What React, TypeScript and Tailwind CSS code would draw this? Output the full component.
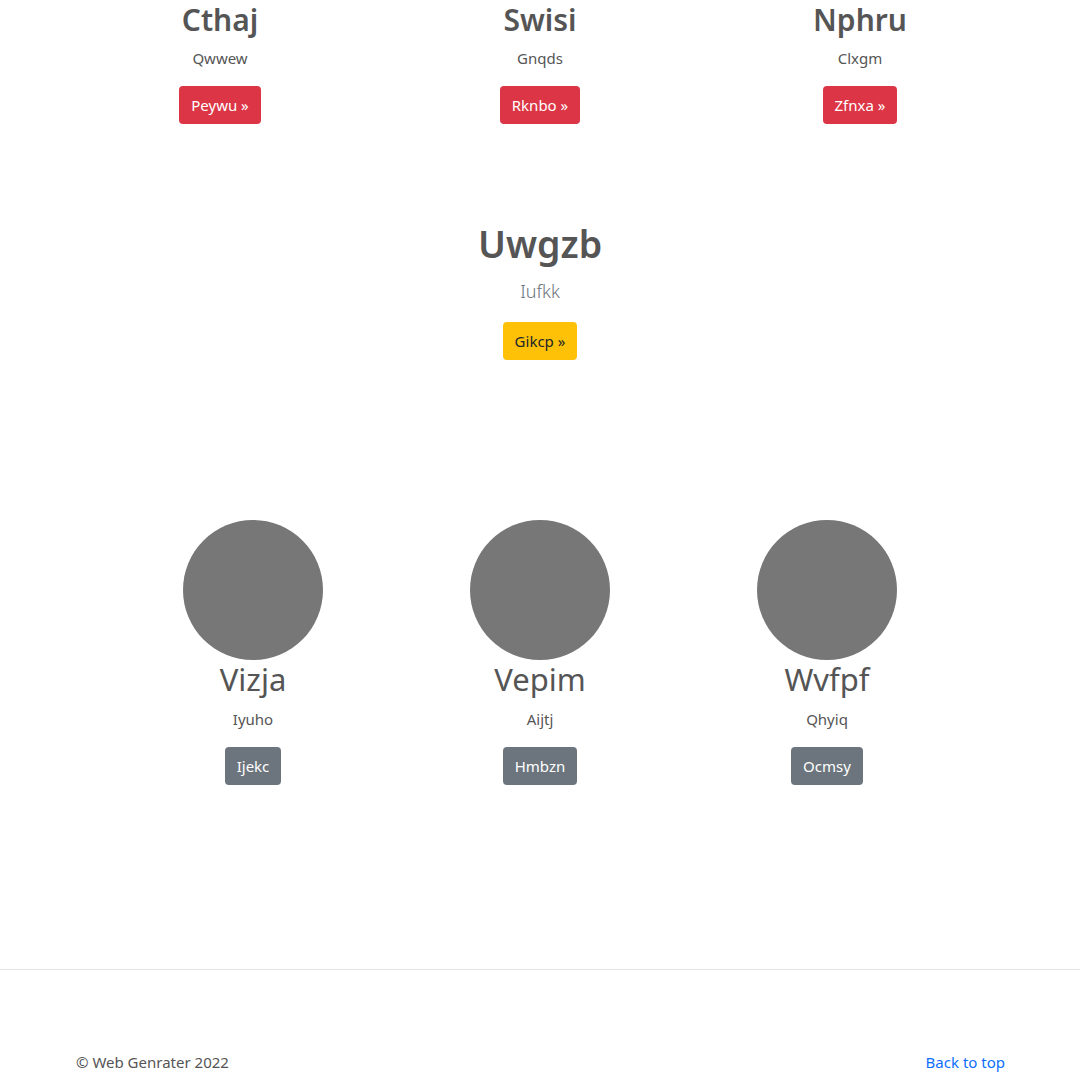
import React from "react";

const font = { fontFamily: '"Noto Sans", "Open Sans", Arial, sans-serif' };

function TopCol({ title, sub, btn }: { title: string; sub: string; btn: string }) {
  return (
    <div className="flex flex-col items-center text-center">
      <h2 className="text-[30px] leading-[38px] font-semibold text-[#555] mb-[7px]">{title}</h2>
      <p className="text-[15px] leading-6 text-[#555] mb-4">{sub}</p>
      <button className="h-[38px] px-3 rounded-[4px] bg-[#dc3545] text-white text-[15px]">{btn} »</button>
    </div>
  );
}

function BottomCol({ title, sub, btn }: { title: string; sub: string; btn: string }) {
  return (
    <div className="flex flex-col items-center text-center">
      <div className="w-[140px] h-[140px] rounded-full bg-[#777]" />
      <h2 className="text-[31px] leading-[38px] font-normal text-[#555] mb-[9px]">{title}</h2>
      <p className="text-[15px] leading-6 text-[#555] mb-4">{sub}</p>
      <button className="h-[38px] px-3 rounded-[4px] bg-[#6c757d] text-white text-[15px]">{btn}</button>
    </div>
  );
}

export default function App() {
  return (
    <div className="bg-white w-full min-h-[1074px] pt-[1px]" style={font}>
      <div className="w-[960px] mx-auto grid grid-cols-3">
        <TopCol title="Cthaj" sub="Qwwew" btn="Peywu" />
        <TopCol title="Swisi" sub="Gnqds" btn="Rknbo" />
        <TopCol title="Nphru" sub="Clxgm" btn="Zfnxa" />
      </div>

      <div className="flex flex-col items-center text-center mt-[96px]">
        <h1 className="text-[37.5px] leading-[48px] font-semibold text-[#555] mb-2">Uwgzb</h1>
        <p className="text-[18px] leading-[30px] font-light text-[#6c757d] mb-4">Iufkk</p>
        <button className="h-[38px] px-3 rounded-[4px] bg-[#ffc107] text-[#212529] text-[15px]">Gikcp »</button>
      </div>

      <div className="w-[861px] mx-auto grid grid-cols-3 mt-[160px]">
        <BottomCol title="Vizja" sub="Iyuho" btn="Ijekc" />
        <BottomCol title="Vepim" sub="Aijtj" btn="Hmbzn" />
        <BottomCol title="Wvfpf" sub="Qhyiq" btn="Ocmsy" />
      </div>

      <hr className="mt-[184px] border-t border-[#e5e5e5]" />

      <footer className="w-[960px] mx-auto px-[15px] flex justify-between items-center pt-[80px] pb-0">
        <p className="text-[15px] leading-6 text-[#555] pl-[1px]">© Web Genrater 2022</p>
        <a href="#" className="text-[15px] leading-6 text-[#0d6efd]">Back to top</a>
      </footer>
    </div>
  );
}
